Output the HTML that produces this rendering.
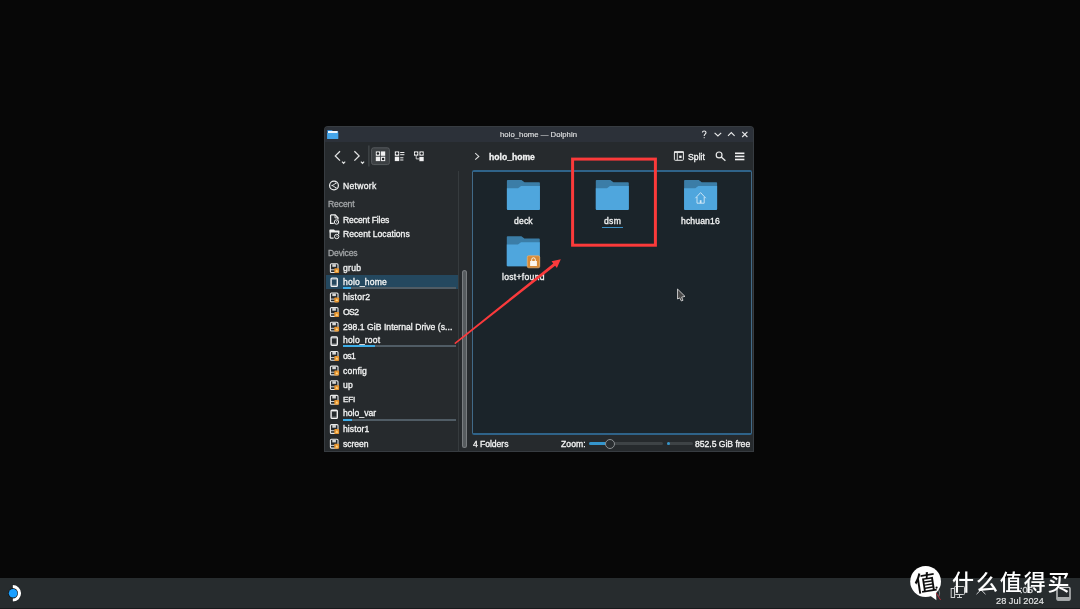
<!DOCTYPE html>
<html>
<head>
<meta charset="utf-8">
<title>holo_home — Dolphin</title>
<style>
html,body{margin:0;padding:0;}
body{width:1080px;height:609px;background:#070707;overflow:hidden;position:relative;font-family:"Liberation Sans","Noto Sans CJK SC",sans-serif;color:#fcfcfc;}
.a{position:absolute;}
svg{position:absolute;left:0;top:0;overflow:visible;}
.t{position:absolute;white-space:nowrap;font-size:8.6px;line-height:10px;height:10px;color:#f4f5f5;-webkit-text-stroke:0.3px currentColor;will-change:transform;}
.h{color:#a3a6a8;}
.b{font-weight:bold;}
.cap{position:absolute;left:343px;width:113px;height:2px;background:#505c65;}
.cap i{position:absolute;left:0;top:0;height:2px;background:#3daee9;}
</style>
</head>
<body>
<!-- taskbar -->
<div class="a" style="left:0;top:578px;width:1080px;height:31px;background:#272c2e;"></div>
<div class="a" style="left:0;top:608px;width:1080px;height:1px;background:#181b1d;"></div>

<!-- window -->
<div class="a" style="left:324px;top:125.6px;width:429.6px;height:326.8px;background:#373c41;border-radius:4px 4px 0 0;"></div>
<div class="a" style="left:325px;top:126.6px;width:427.6px;height:324.9px;background:#262a2d;border-radius:3px 3px 0 0;"></div>
<div class="a" style="left:325px;top:126.6px;width:427.6px;height:15.2px;background:#2c3139;border-radius:3px 3px 0 0;"></div>

<!-- sidebar separator -->
<div class="a" style="left:458px;top:171px;width:1px;height:281px;background:#363b3e;"></div>

<!-- view -->
<div class="a" style="left:472px;top:170px;width:280.4px;height:265px;background:#2f6389;border-radius:2px;"></div>
<div class="a" style="left:472px;top:172px;width:280.4px;height:261.2px;background:#416a88;"></div>
<div class="a" style="left:473px;top:172px;width:278.4px;height:261.2px;background:#1b242a;"></div>

<!-- selected row + capacity bars -->
<div class="a" style="left:325.8px;top:274.6px;width:132.4px;height:14.6px;background:#24485f;"></div>
<div class="cap" style="top:286.8px;"><i style="width:8px"></i></div>
<div class="cap" style="top:345px;"><i style="width:32px"></i></div>
<div class="cap" style="top:418.5px;"><i style="width:9px"></i></div>

<!-- sidebar scrollbar -->
<div class="a" style="left:462px;top:270px;width:5.2px;height:177.6px;background:#797d80;border-radius:3px;"></div>
<div class="a" style="left:463px;top:271px;width:3.4px;height:175.6px;background:#565b5e;border-radius:2px;"></div>

<!-- file label underline -->
<div class="a" style="left:602px;top:226.5px;width:20.5px;height:1px;background:#3b8fc4;"></div>

<!-- status bar widgets -->
<div class="a" style="left:589px;top:442px;width:74px;height:3px;background:#3e4346;border-radius:2px;"></div>
<div class="a" style="left:589px;top:442px;width:21px;height:3px;background:#3596cd;border-radius:2px;"></div>
<div class="a" style="left:605.2px;top:439px;width:8.2px;height:8.2px;background:#2a2e31;border:0.8px solid #8a8e91;border-radius:50%;box-sizing:content-box;"></div>
<div class="a" style="left:667px;top:442px;width:26px;height:3px;background:#3e4346;border-radius:2px;"></div>
<div class="a" style="left:667px;top:442px;width:2.5px;height:3px;background:#3596cd;border-radius:2px;"></div>

<div class="t" style="left:500.0px;top:129.7px;letter-spacing:0.05px;font-size:7.7px;color:#e4e5e6;-webkit-text-stroke:0.12px currentColor;">holo_home — Dolphin</div>
<div class="t" style="left:343.0px;top:181px;letter-spacing:0.28px;">Network</div>
<div class="t h" style="left:328.0px;top:199px;letter-spacing:-0.12px;">Recent</div>
<div class="t" style="left:343.0px;top:215px;letter-spacing:-0.13px;">Recent Files</div>
<div class="t" style="left:343.0px;top:229px;letter-spacing:0.02px;">Recent Locations</div>
<div class="t h" style="left:328.0px;top:248px;letter-spacing:-0.17px;">Devices</div>
<div class="t" style="left:343.0px;top:262.6px;letter-spacing:0.30px;">grub</div>
<div class="t" style="left:343.0px;top:277px;letter-spacing:0.16px;">holo_home</div>
<div class="t" style="left:343.0px;top:292.4px;letter-spacing:0.21px;">histor2</div>
<div class="t" style="left:343.0px;top:306.9px;letter-spacing:-0.57px;">OS2</div>
<div class="t" style="left:343.0px;top:322px;letter-spacing:0.03px;">298.1 GiB Internal Drive (s...</div>
<div class="t" style="left:343.0px;top:334.9px;letter-spacing:0.15px;">holo_root</div>
<div class="t" style="left:343.0px;top:350.5px;letter-spacing:-0.49px;">os1</div>
<div class="t" style="left:343.0px;top:365.7px;letter-spacing:0.19px;">config</div>
<div class="t" style="left:343.0px;top:380.2px;letter-spacing:0.22px;">up</div>
<div class="t" style="left:343.0px;top:394.9px;letter-spacing:-0.20px;font-size:8.1px;">EFI</div>
<div class="t" style="left:343.0px;top:408.2px;letter-spacing:0.03px;">holo_var</div>
<div class="t" style="left:343.0px;top:423.9px;letter-spacing:0.07px;">histor1</div>
<div class="t" style="left:343.0px;top:438.5px;letter-spacing:-0.03px;">screen</div>
<div class="t b" style="left:489.2px;top:151.5px;letter-spacing:-0.00px;">holo_home</div>
<div class="t" style="left:687.7px;top:151.5px;letter-spacing:0.06px;">Split</div>
<div class="t" style="left:514.1px;top:216px;letter-spacing:0.16px;">deck</div>
<div class="t" style="left:603.6px;top:216px;letter-spacing:0.32px;">dsm</div>
<div class="t" style="left:681.0px;top:216px;letter-spacing:0.14px;">hchuan16</div>
<div class="t" style="left:502.0px;top:272px;letter-spacing:0.29px;">lost+found</div>
<div class="t" style="left:473.1px;top:439px;letter-spacing:-0.05px;">4 Folders</div>
<div class="t" style="left:560.8px;top:439px;letter-spacing:0.09px;">Zoom:</div>
<div class="t" style="left:694.8px;top:439px;letter-spacing:-0.02px;">852.5 GiB free</div>
<div class="t" style="left:995.6px;top:595.5px;letter-spacing:0.03px;font-size:9.2px;color:#e6e7e7;-webkit-text-stroke:0.15px currentColor;">28 Jul 2024</div>

<svg width="1080" height="609" viewBox="0 0 1080 609">
<defs>
  <symbol id="fold" viewBox="0 0 33 30" overflow="visible">
    <path d="M0,0.8 Q0,0 0.8,0 H14.6 L17.6,2.4 H32.2 Q33,2.4 33,3.2 V29.2 Q33,30 32.2,30 H0.8 Q0,30 0,29.2Z" fill="#3b7da7"/>
    <path d="M0,8.3 H11.2 L14.2,6 H33 V29.2 Q33,30 32.2,30 H0.8 Q0,30 0,29.2Z" fill="#4fa6dd"/>
  </symbol>
  <symbol id="dev" viewBox="0 0 10 10" overflow="visible">
    <rect x="0.7" y="0.5" width="7.6" height="8.8" rx="1" fill="none" stroke="#e8e9e9" stroke-width="1.1"/>
    <rect x="2.6" y="1" width="3.6" height="2.6" fill="#d6d7d8"/>
    <path d="M1,6.6H5" stroke="#e8e9e9" stroke-width="0.9"/>
    <rect x="4.6" y="5" width="4.8" height="4.9" rx="0.8" fill="#e6932e"/>
    <path d="M5.6,8.6 L7.2,6.2 L8.6,8.6Z" fill="#ffd98a"/>
  </symbol>
  <symbol id="holo" viewBox="0 0 10 10" overflow="visible">
    <rect x="1.2" y="0.8" width="6.2" height="8.2" rx="0.9" fill="none" stroke="#f4f4f5" stroke-width="1.35"/>
    <path d="M1.6,2.1H7 M1.6,7.7H7" stroke="#cfd0d1" stroke-width="0.5"/>
  </symbol>
</defs>

<!-- titlebar app icon -->
<path d="M327.2,130.5 Q327.2,129.9 327.8,129.9 H331.8 L332.9,131 H337.6 Q338.2,131 338.2,131.6 V138.4 Q338.2,139 337.6,139 H327.8 Q327.2,139 327.2,138.4Z" fill="#2f86cc"/>
<rect x="328" y="131" width="9.6" height="2.2" fill="#eef6fc"/>
<path d="M327.2,133 H338.2 V138.4 Q338.2,139 337.6,139 H327.8 Q327.2,139 327.2,138.4Z" fill="#45a6ea"/>
<!-- titlebar buttons -->
<g fill="none" stroke="#e8e9ea" stroke-width="1.12" stroke-linecap="butt">
  <path d="M702.4,132.6 Q702.4,131 704.2,131 Q706,131 706,132.6 Q706,133.6 705,134.2 Q704.2,134.7 704.2,135.9"/>
  <path d="M714.6,132.8 L717.9,136 L721.2,132.8"/>
  <path d="M728,135.8 L731.3,132.5 L734.6,135.8"/>
  <path d="M742.2,131.9 L747.4,137 M747.4,131.9 L742.2,137"/>
</g>
<rect x="703.7" y="137.1" width="1" height="1.1" fill="#e4e5e6"/>

<!-- toolbar nav -->
<g fill="none" stroke="#e2e3e3" stroke-width="1.3">
  <path d="M340,151.3 L335.3,155.9 L340,160.6"/>
  <path d="M354.4,151.3 L359.1,155.9 L354.4,160.6"/>
</g>
<path d="M475.2,153.2 L478.8,156.4 L475.2,159.6" fill="none" stroke="#dcdddd" stroke-width="1.1"/>
<g fill="none" stroke="#e2e3e3" stroke-width="1.2">
  <path d="M342,161.7 L343.6,163.3 L345.2,161.7"/>
  <path d="M360.9,161.7 L362.5,163.3 L364.1,161.7"/>
</g>
<rect x="368.2" y="145.5" width="1.3" height="21" fill="#43484b"/>
<rect x="371.6" y="147.8" width="17.8" height="16.8" rx="2" fill="#3c4043" stroke="#5a5e61" stroke-width="0.9"/>

<!-- view-mode icons -->
<g fill="#f0f0f1">
  <rect x="375.8" y="151.4" width="4.3" height="4.4"/><rect x="380.9" y="151.4" width="4.3" height="4.4"/>
  <rect x="375.8" y="156.7" width="4.3" height="4.4"/><rect x="380.9" y="156.7" width="4.3" height="4.4"/>
  <rect x="394.8" y="151.4" width="4.4" height="4.4"/><rect x="394.8" y="156.7" width="4.4" height="4.4"/>
  <rect x="400.2" y="152" width="4.2" height="1"/><rect x="400.2" y="154.2" width="4.2" height="1"/>
  <rect x="400.2" y="157.3" width="3.2" height="1"/><rect x="400.2" y="159.5" width="3.2" height="1"/>
  <rect x="414" y="151.4" width="4.3" height="4.3"/><rect x="419.4" y="151.4" width="4.3" height="4.3"/>
  <rect x="419.4" y="156.9" width="4.3" height="4.3"/>
</g>
<path d="M416.2,155.6 V158.9 H419.6" fill="none" stroke="#f0f0f1" stroke-width="0.8"/>
<g fill="#1d2023">
  <circle cx="377.9" cy="153.6" r="1.25"/><circle cx="383.1" cy="158.9" r="1.25"/>
  <circle cx="397" cy="153.6" r="1.25"/>
  <circle cx="416.1" cy="153.5" r="1.25"/><circle cx="421.6" cy="153.5" r="1.25"/>
</g>

<!-- split / search / menu -->
<rect x="674.4" y="151.9" width="9" height="8.4" rx="0.8" fill="none" stroke="#ebecec" stroke-width="1"/>
<rect x="674" y="151.3" width="9.8" height="1.6" fill="#ebecec"/>
<path d="M677.3,152.5 V160.2" stroke="#ebecec" stroke-width="0.9"/>
<rect x="679.2" y="155.6" width="2.4" height="2.4" fill="#ebecec"/>
<circle cx="719.1" cy="154.9" r="2.9" fill="none" stroke="#eaebeb" stroke-width="1.2"/>
<path d="M721.2,157 L725.4,160.8" stroke="#eaebeb" stroke-width="1.3"/>
<g fill="#f0f0f1"><rect x="735" y="152.5" width="9.4" height="1.6"/><rect x="735" y="155.6" width="9.4" height="1.6"/><rect x="735" y="158.7" width="9.4" height="1.6"/></g>

<!-- sidebar icons -->
<circle cx="334" cy="185.5" r="4.4" fill="none" stroke="#eeefef" stroke-width="1.25"/>
<path d="M335.6,183.4 L332.4,185.5 L335.6,187.6" fill="none" stroke="#e9eaea" stroke-width="0.9"/>
<g fill="#e9eaea"><circle cx="335.8" cy="183.3" r="0.8"/><circle cx="332.2" cy="185.5" r="0.8"/><circle cx="335.8" cy="187.7" r="0.8"/></g>

<path d="M330.6,214.9 H335.2 L338,217.7 V219.6 M333.8,223.4 H330.6 V214.9" fill="none" stroke="#eeefef" stroke-width="1.25"/>
<path d="M335,215 V217.9 H338" fill="none" stroke="#eeefef" stroke-width="0.9"/>
<circle cx="336.5" cy="222" r="2.2" fill="#262a2d" stroke="#eeefef" stroke-width="1"/>
<path d="M336.5,220.9 V222.1 H337.4" fill="none" stroke="#eeefef" stroke-width="0.6"/>

<path d="M330.2,238.1 V229.9 M330.2,238.1 H333.6 M338.7,231 V234.2" fill="none" stroke="#eeefef" stroke-width="1.25"/>
<path d="M329.6,229.4 H334 L335,230.4 H339.3 V232.6 H329.6Z" fill="#eeefef"/>
<circle cx="336.7" cy="236.5" r="2.2" fill="#262a2d" stroke="#eeefef" stroke-width="1"/>
<path d="M336.7,235.4 V236.6 H337.6" fill="none" stroke="#eeefef" stroke-width="0.6"/>

<use href="#dev" x="329.7" y="263.2" width="10" height="10"/>
<use href="#holo" x="329.9" y="277.4" width="10" height="10"/>
<use href="#dev" x="329.7" y="292.5" width="10" height="10"/>
<use href="#dev" x="329.7" y="307.1" width="10" height="10"/>
<use href="#dev" x="329.7" y="321.7" width="10" height="10"/>
<use href="#holo" x="329.9" y="336.2" width="10" height="10"/>
<use href="#dev" x="329.7" y="351" width="10" height="10"/>
<use href="#dev" x="329.7" y="365.6" width="10" height="10"/>
<use href="#dev" x="329.7" y="380.2" width="10" height="10"/>
<use href="#dev" x="329.7" y="394.9" width="10" height="10"/>
<use href="#holo" x="329.9" y="409.4" width="10" height="10"/>
<use href="#dev" x="329.7" y="424.1" width="10" height="10"/>
<use href="#dev" x="329.7" y="438.8" width="10" height="10"/>

<!-- folders -->
<use href="#fold" x="506.9" y="179.9" width="33" height="30"/>
<use href="#fold" x="595.8" y="179.9" width="33" height="30"/>
<use href="#fold" x="684.1" y="179.9" width="33" height="30"/>
<use href="#fold" x="506.8" y="236.2" width="33" height="30"/>
<!-- home glyph -->
<path d="M695.4,198.2 L700.6,192.6 L705.8,198.2 M697,197 V203.2 H704.2 V197" fill="none" stroke="#d4e9f7" stroke-width="0.9"/>
<rect x="699.8" y="200.2" width="1.7" height="3" fill="#d4e9f7"/>
<!-- lock emblem -->
<rect x="527.3" y="255.8" width="12.4" height="12" rx="1.4" fill="#d88a36" stroke="#e9b377" stroke-width="0.7"/>
<rect x="530.1" y="261" width="6.8" height="5" fill="#fbf6ee"/>
<path d="M531.7,261 V259.6 Q531.7,257.8 533.5,257.8 Q535.3,257.8 535.3,259.6 V261" fill="none" stroke="#fbf6ee" stroke-width="1"/>

<!-- red annotations -->
<rect x="572.6" y="159.1" width="82.8" height="86.1" fill="none" stroke="#fb3a3a" stroke-width="3"/>
<path d="M454.3,343.0 L553.28,263.4 L551.55,261.2 L560.8,259.3 L556.9,267.95 L555.12,265.74 L455.2,344.15Z" fill="#fa3a3c"/>

<!-- cursor -->
<path d="M677.5,289 V299 L679.7,297.9 L681.4,301 L683,300.3 L681.7,297.1 L685,296.4Z" fill="#4a4a4a" stroke="#e3e3e3" stroke-width="0.8" stroke-linejoin="round"/>

<!-- steam deck logo -->
<circle cx="13.1" cy="593.3" r="5.1" fill="#15191b"/>
<path d="M12.3,584.4 A8.9,8.9 0 0 1 12.3,602.2Z" fill="#15191b"/>
<circle cx="13.1" cy="593.3" r="4.3" fill="#1a9fff"/>
<path d="M12.8,585 A8.3,8.3 0 0 1 12.8,601.6 V598.5 A5.2,5.2 0 0 0 12.8,588.1Z" fill="#ffffff"/>

<!-- tray icons (behind watermark) -->
<g fill="none" stroke="#cfd1d2" stroke-width="1">
  <rect x="954.5" y="586.5" width="10" height="8" rx="0.8"/>
  <path d="M957,597.5 H962 M959.5,594.5 V597.5"/>
  <rect x="951.2" y="588.5" width="3.4" height="9"/>
  <path d="M976.5,594.2 L981,589.8 L985.5,594.2"/>
</g>
<rect x="1057" y="587.4" width="13" height="12.6" rx="1" fill="none" stroke="#c9cbcc" stroke-width="1.4"/>
<rect x="1057" y="597" width="13" height="3.2" fill="#a9acad"/>
</svg>

<!-- clock time (mostly hidden behind watermark) -->
<div class="t" style="left:1020px;top:584.8px;font-size:9.4px;color:#d0d2d3;">:05</div>

<!-- watermark -->
<svg width="1080" height="609" viewBox="0 0 1080 609">
  <path d="M938.6,589.6 Q940.6,593 938.8,596.6" fill="none" stroke="#8d9193" stroke-width="0.9"/>
  <path d="M936.2,593 L940.6,600" stroke="#c2283a" stroke-width="0.9"/>
  <circle cx="925.6" cy="581.5" r="15.4" fill="#ffffff"/>
  <path d="M930.6,596 L936.4,600.2 L936,592.5Z" fill="#ffffff"/>
  <circle cx="936.6" cy="587.6" r="1.1" fill="#111111"/>
</svg>
<div class="a" style="left:913.5px;top:568.3px;width:22px;height:26px;line-height:26px;font-size:22px;font-weight:500;color:#0d0d0d;text-align:center;font-family:'Noto Sans CJK SC','Liberation Sans',sans-serif;transform:rotate(-9deg);">值</div>
<div class="a" style="left:952px;top:567.4px;height:32px;line-height:32px;font-size:22px;font-weight:500;color:#ffffff;white-space:nowrap;letter-spacing:1.9px;font-family:'Liberation Sans','Noto Sans CJK SC',sans-serif;">什么值得买</div>
</body>
</html>
